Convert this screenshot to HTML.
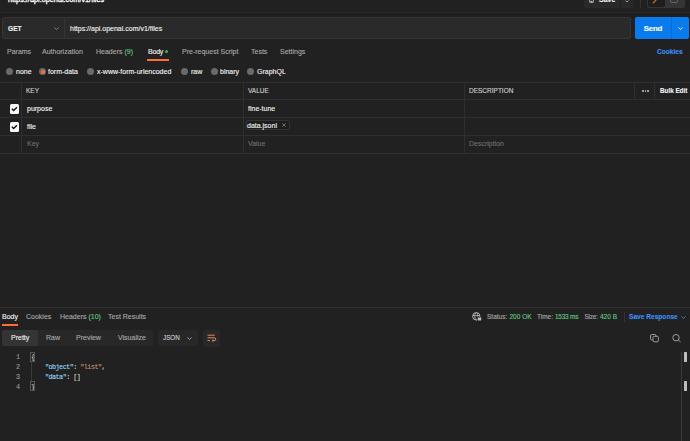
<!DOCTYPE html>
<html><head><meta charset="utf-8">
<style>
*{margin:0;padding:0;box-sizing:border-box}
html,body{width:690px;height:441px;overflow:hidden;background:#212121}
body{position:relative;font-family:"Liberation Sans",sans-serif;color:#a8a8a8;font-size:7px}
.a{position:absolute;white-space:nowrap;line-height:10px;-webkit-text-stroke:0.12px currentColor}
.w{color:#f2f2f2}
.g{color:#62c982}
.b{color:#3d90f5}
.ph{color:#6e6e6e}
.hl{position:absolute;height:1px;background:#2f2f2f}
.vl{position:absolute;width:1px;background:#2f2f2f}
.bx{position:absolute}
svg{position:absolute;overflow:visible}
.mono{font-family:"Liberation Mono",monospace}
.rad{position:absolute;width:7px;height:7px;border-radius:50%;background:#6a6a6a;top:68px}
</style></head><body>
<!-- top bar -->
<div class="a w" style="left:8px;top:-5px;font-size:7.3px;color:#fff;-webkit-text-stroke:0.3px #fff">https://api.openai.com/v1/files</div>
<div class="bx" style="left:584px;top:-4px;width:36px;height:12px;background:#292929;border-radius:2px"></div>
<svg style="left:589px;top:-2px" width="5" height="5" viewBox="0 0 5 5"><rect x="0.5" y="0.5" width="4" height="4" rx="0.6" stroke="#bbb" stroke-width="0.8" fill="none"/><rect x="1.5" y="2.8" width="2" height="1.4" fill="#bbb"/></svg>
<div class="a w" style="left:599px;top:-5px;font-size:7px;font-weight:bold">Save</div>
<div class="bx" style="left:621px;top:-4px;width:12px;height:12px;background:#292929;border-radius:2px"></div>
<svg style="left:625px;top:0px" width="4" height="3" viewBox="0 0 4 3"><path d="M0.5 0.5 L2 2 L3.5 0.5" stroke="#bbb" stroke-width="0.8" fill="none"/></svg>
<div class="vl" style="left:640px;top:0;height:8px;background:#333"></div>
<div class="bx" style="left:647px;top:-4px;width:38px;height:12px;background:#353535;border-radius:2px"></div>
<div class="bx" style="left:648px;top:-4px;width:17px;height:11px;background:#1e1e1e;border-radius:2px"></div>
<svg style="left:652px;top:-1px" width="6" height="5" viewBox="0 0 6 5"><path d="M0.8 4.3 L5 0" stroke="#e0703a" stroke-width="1.1" fill="none"/></svg>
<svg style="left:670px;top:-2px" width="8" height="5" viewBox="0 0 8 5"><path d="M0.5 0 V3 Q0.5 4.5 2 4.5 H6 Q7.5 4.5 7.5 3 V0" stroke="#6a6a6a" stroke-width="0.9" fill="none"/></svg>
<div class="hl" style="left:0;top:12px;width:690px;background:#2b2b2b"></div>
<div class="bx" style="left:0;top:13px;width:690px;height:4px;background:#1f1f1f"></div>

<!-- request bar -->
<div class="bx" style="left:2px;top:17px;width:629px;height:22px;border:1px solid #353535;border-radius:2px;background:#2a2a2a"></div>
<div class="vl" style="left:64px;top:17px;height:22px;background:#353535"></div>
<div class="a w" style="left:8px;top:24px;font-weight:bold;font-size:6.6px">GET</div>
<svg style="left:54px;top:27px" width="5" height="3" viewBox="0 0 5 3"><path d="M0.5 0.5 L2.5 2.5 L4.5 0.5" stroke="#999" stroke-width="0.8" fill="none"/></svg>
<div class="a w" style="left:70px;top:23.5px">https://api.openai.com/v1/files</div>

<div class="bx" style="left:635px;top:17px;width:54px;height:22px;background:#097bed;border-radius:2px"></div>
<div class="vl" style="left:671px;top:17px;height:22px;background:#0a6cd0"></div>
<div class="a" style="left:643.8px;top:23.8px;color:#fff;font-weight:bold;font-size:7.9px;letter-spacing:-0.25px">Send</div>
<svg style="left:678px;top:27px" width="5" height="3" viewBox="0 0 5 3"><path d="M0.5 0.5 L2.5 2.5 L4.5 0.5" stroke="#fff" stroke-width="1" fill="none"/></svg>

<!-- tabs -->
<div class="a" style="left:7px;top:47px">Params</div>
<div class="a" style="left:42px;top:47px">Authorization</div>
<div class="a" style="left:96px;top:47px">Headers <span class="g">(9)</span></div>
<div class="a w" style="left:148px;top:47px;letter-spacing:-0.2px">Body</div>
<div class="bx" style="left:165px;top:50px;width:3px;height:3px;border-radius:50%;background:#1ec45c"></div>
<div class="bx" style="left:147px;top:59px;width:22px;height:1.5px;background:#ff6c37"></div>
<div class="a" style="left:182px;top:47px">Pre-request Script</div>
<div class="a" style="left:251px;top:47px">Tests</div>
<div class="a" style="left:280px;top:47px">Settings</div>
<div class="a b" style="left:657px;top:47px;font-weight:bold;font-size:6.6px">Cookies</div>

<!-- radios -->
<div class="rad" style="left:6px"></div>
<div class="a w" style="left:16px;top:66.5px">none</div>
<div class="rad" style="left:39px"></div>
<div class="bx" style="left:40.5px;top:69.5px;width:4px;height:4px;border-radius:50%;background:#ff6c37"></div>
<div class="a w" style="left:48px;top:66.5px">form-data</div>
<div class="rad" style="left:87px"></div>
<div class="a w" style="left:97px;top:66.5px">x-www-form-urlencoded</div>
<div class="rad" style="left:181px"></div>
<div class="a w" style="left:191px;top:66.5px">raw</div>
<div class="rad" style="left:211px"></div>
<div class="a w" style="left:220px;top:66.5px">binary</div>
<div class="rad" style="left:247px"></div>
<div class="a w" style="left:257px;top:66.5px">GraphQL</div>

<!-- table -->
<div class="hl" style="left:0;top:82px;width:690px"></div>
<div class="hl" style="left:0;top:99px;width:690px"></div>
<div class="hl" style="left:0;top:117px;width:690px"></div>
<div class="hl" style="left:0;top:135px;width:690px"></div>
<div class="hl" style="left:0;top:153px;width:690px"></div>
<div class="vl" style="left:21px;top:82px;height:71px"></div>
<div class="vl" style="left:243px;top:82px;height:71px"></div>
<div class="vl" style="left:464px;top:82px;height:71px"></div>
<div class="vl" style="left:634px;top:82px;height:17px"></div>
<div class="vl" style="left:654px;top:82px;height:17px"></div>
<div class="a" style="left:26px;top:86px;font-size:6.5px;color:#d0d0d0">KEY</div>
<div class="a" style="left:248px;top:86px;font-size:6.5px;color:#d0d0d0">VALUE</div>
<div class="a" style="left:469px;top:86px;font-size:6.5px;color:#d0d0d0">DESCRIPTION</div>
<div class="bx" style="left:642px;top:90px;width:1.6px;height:1.6px;border-radius:50%;background:#b8b8b8"></div>
<div class="bx" style="left:644.5px;top:90px;width:1.6px;height:1.6px;border-radius:50%;background:#b8b8b8"></div>
<div class="bx" style="left:647px;top:90px;width:1.6px;height:1.6px;border-radius:50%;background:#b8b8b8"></div>
<div class="a w" style="left:660px;top:86px;font-weight:bold;font-size:6.3px">Bulk Edit</div>

<div class="bx" style="left:10px;top:104px;width:9px;height:10px;border-radius:1.5px;background:#f8f8f8"></div>
<svg style="left:10px;top:104px" width="9" height="10" viewBox="0 0 9 10"><path d="M1.8 4.8 L3.6 6.5 L7 3.2" stroke="#111" stroke-width="1.4" fill="none"/></svg>
<div class="a w" style="left:27px;top:104px">purpose</div>
<div class="a w" style="left:248px;top:104px">fine-tune</div>

<div class="bx" style="left:10px;top:122px;width:9px;height:10px;border-radius:1.5px;background:#f8f8f8"></div>
<svg style="left:10px;top:122px" width="9" height="10" viewBox="0 0 9 10"><path d="M1.8 4.8 L3.6 6.5 L7 3.2" stroke="#111" stroke-width="1.4" fill="none"/></svg>
<div class="a w" style="left:27px;top:122px">file</div>
<div class="bx" style="left:246px;top:120px;width:44px;height:10px;border:1px solid #333;border-radius:2px;background:#1d1d1d"></div>
<div class="a w" style="left:247px;top:121px">data.jsonl</div>
<svg style="left:282px;top:123px" width="4" height="4" viewBox="0 0 4 4"><path d="M0.2 0.2 L3.8 3.8 M3.8 0.2 L0.2 3.8" stroke="#aaa" stroke-width="0.55"/></svg>

<div class="a ph" style="left:27px;top:139px">Key</div>
<div class="a ph" style="left:248px;top:139px">Value</div>
<div class="a ph" style="left:469px;top:139px">Description</div>

<!-- response -->
<div class="hl" style="left:0;top:307px;width:690px"></div>
<div class="a w" style="left:2px;top:312px">Body</div>
<div class="bx" style="left:2px;top:324px;width:16px;height:1.5px;background:#ff6c37"></div>
<div class="a" style="left:26px;top:312px">Cookies</div>
<div class="a" style="left:60px;top:312px">Headers <span class="g">(10)</span></div>
<div class="a" style="left:108px;top:312px">Test Results</div>

<svg style="left:472px;top:312px" width="10" height="9" viewBox="0 0 10 9"><circle cx="4.3" cy="4.3" r="3.7" stroke="#bbb" stroke-width="0.9" fill="none"/><path d="M0.8 3.6 H7.8" stroke="#bbb" stroke-width="0.8"/><ellipse cx="4.3" cy="4.3" rx="1.6" ry="3.7" stroke="#bbb" stroke-width="0.8" fill="none"/><rect x="5.4" y="4.6" width="4.2" height="4" rx="0.8" fill="#212121"/><rect x="6" y="5.8" width="3.2" height="2.6" rx="0.5" fill="#bbb"/><path d="M6.7 5.8 V5.1 Q7.6 4.2 8.5 5.1 V5.8" stroke="#bbb" stroke-width="0.6" fill="none"/></svg>
<div class="a" style="left:487px;top:312px;font-size:6.5px">Status:</div>
<div class="a g" style="left:509.5px;top:312px;font-size:6.5px">200 OK</div>
<div class="a" style="left:537px;top:312px;font-size:6.5px">Time:</div>
<div class="a g" style="left:555px;top:312px;font-size:6.5px;letter-spacing:-0.25px">1533 ms</div>
<div class="a" style="left:584.5px;top:312px;font-size:6.5px;letter-spacing:-0.3px">Size:</div>
<div class="a g" style="left:600px;top:312px;font-size:6.5px">420 B</div>
<div class="vl" style="left:624px;top:312px;height:10px;background:#333"></div>
<div class="a b" style="left:629px;top:312px;font-weight:bold;font-size:6.6px">Save Response</div>
<svg style="left:681px;top:316px" width="5" height="3" viewBox="0 0 5 3"><path d="M0.5 0.5 L2.5 2.5 L4.5 0.5" stroke="#3d90f5" stroke-width="0.8" fill="none"/></svg>

<div class="bx" style="left:2px;top:330px;width:151px;height:16px;background:#282828;border-radius:2px"></div>
<div class="bx" style="left:2px;top:330px;width:36px;height:16px;background:#343434;border-radius:2px"></div>
<div class="a w" style="left:11px;top:333px">Pretty</div>
<div class="a" style="left:46px;top:333px">Raw</div>
<div class="a" style="left:76px;top:333px">Preview</div>
<div class="a" style="left:118px;top:333px">Visualize</div>
<div class="bx" style="left:158px;top:330px;width:40px;height:16px;background:#282828;border-radius:2px"></div>
<div class="a" style="left:163px;top:333px;font-size:6.3px;color:#e0e0e0;-webkit-text-stroke:0">JSON</div>
<svg style="left:187px;top:337px" width="5" height="3" viewBox="0 0 5 3"><path d="M0.5 0.5 L2.5 2.5 L4.5 0.5" stroke="#bbb" stroke-width="0.8" fill="none"/></svg>
<div class="bx" style="left:203px;top:330px;width:17px;height:17px;background:#282828;border-radius:2px"></div>
<svg style="left:207px;top:334px" width="10" height="9" viewBox="0 0 10 9"><path d="M0.5 1.2 H7.8 M0.5 3.8 H7 Q8.8 3.8 8.8 5.2 Q8.8 6.6 7 6.6 H5.5 M0.5 6.6 H3" stroke="#e8875a" stroke-width="1" fill="none"/><path d="M6.3 5.4 L5 6.6 L6.3 7.8" stroke="#e8875a" stroke-width="0.9" fill="none"/></svg>

<svg style="left:650px;top:334px" width="10" height="9" viewBox="0 0 10 9"><path d="M2.5 6 H1.8 Q0.5 6 0.5 4.7 V1.8 Q0.5 0.5 1.8 0.5 H4.7 Q6 0.5 6 1.8 V2.2" stroke="#aaa" stroke-width="0.9" fill="none"/><rect x="3" y="2.3" width="5.4" height="5.5" rx="1.2" stroke="#aaa" stroke-width="0.9" fill="none"/></svg>
<svg style="left:671.5px;top:334px" width="10" height="9" viewBox="0 0 10 9"><circle cx="4" cy="3.7" r="3.2" stroke="#aaa" stroke-width="0.9" fill="none"/><path d="M6.3 6 L8.5 8" stroke="#aaa" stroke-width="0.9"/></svg>

<div class="mono" style="position:absolute;left:0;top:352px;font-size:6.8px;letter-spacing:-0.55px;line-height:10px;color:#d4d4d4;-webkit-text-stroke:0.1px currentColor">
<div style="position:absolute;left:16px;top:0;color:#9a9a9a">1</div>
<div style="position:absolute;left:16px;top:10px;color:#9a9a9a">2</div>
<div style="position:absolute;left:16px;top:20px;color:#9a9a9a">3</div>
<div style="position:absolute;left:16px;top:30px;color:#9a9a9a">4</div>
<div style="position:absolute;left:31px;top:0">{</div>
<div style="position:absolute;left:45px;top:10px;white-space:pre"><span style="color:#9cdcfe">"object"</span>: <span style="color:#ce9178">"list"</span>,</div>
<div style="position:absolute;left:45px;top:20px;white-space:pre"><span style="color:#9cdcfe">"data"</span>: []</div>
<div style="position:absolute;left:31px;top:30px">}</div>
</div>
<div class="bx" style="left:30px;top:352px;width:5px;height:10px;border:1px solid #555"></div>
<div class="bx" style="left:30px;top:381px;width:5px;height:10px;border:1px solid #555"></div>
<div class="vl" style="left:31px;top:362px;height:19px;background:#3a3a3a"></div>

<div class="vl" style="left:681px;top:352px;height:89px;background:#3a3a3a"></div>
<div class="bx" style="left:684px;top:352px;width:3px;height:10px;background:#bdbdbd;border-radius:0.5px"></div>
<div class="bx" style="left:684px;top:381px;width:3px;height:10px;background:#bdbdbd;border-radius:0.5px"></div>
</body></html>
